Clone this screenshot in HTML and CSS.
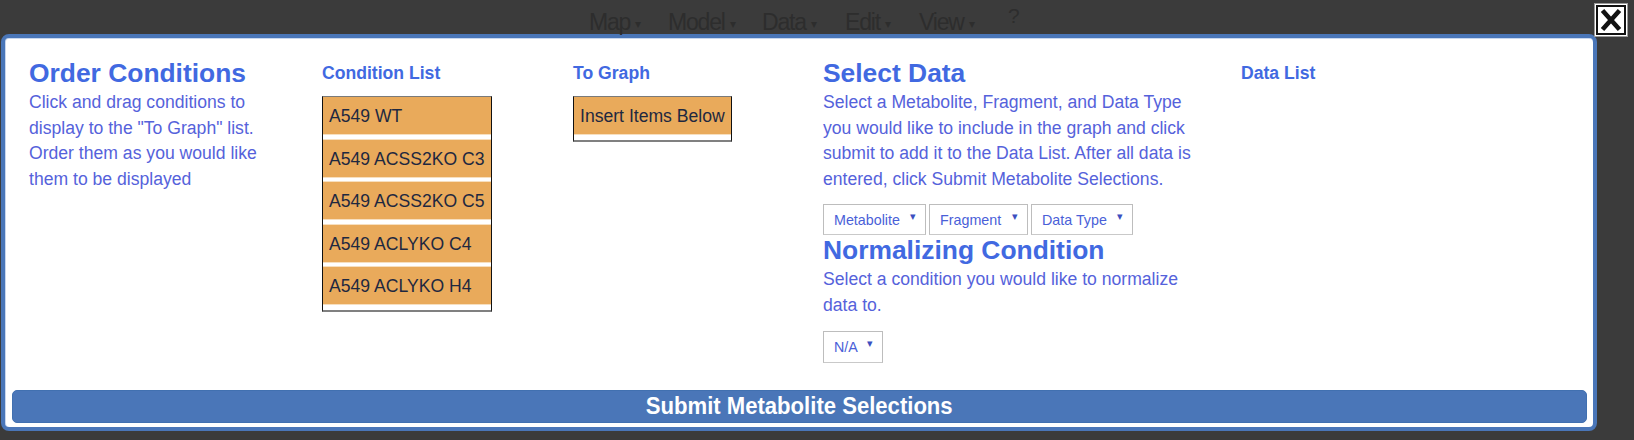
FILE: index.html
```html
<!DOCTYPE html>
<html>
<head>
<meta charset="utf-8">
<link rel="stylesheet" href="styles.css">
</head>
<body>
<div class="page">
  <nav class="menu">
    <span class="menu-item m-map"><span class="menu-text">Map</span><span class="caret">▾</span></span>
    <span class="menu-item m-model"><span class="menu-text">Model</span><span class="caret">▾</span></span>
    <span class="menu-item m-data"><span class="menu-text">Data</span><span class="caret">▾</span></span>
    <span class="menu-item m-edit"><span class="menu-text">Edit</span><span class="caret">▾</span></span>
    <span class="menu-item m-view"><span class="menu-text">View</span><span class="caret">▾</span></span>
    <span class="menu-item help"><span class="menu-text">?</span></span>
  </nav>

  <div class="modal">
    <div class="cols">
      <section class="col">
        <h2 class="title">Order Conditions</h2>
        <p class="desc desc-narrow">Click and drag conditions to display to the "To Graph" list. Order them as you would like them to be displayed</p>
      </section>

      <section class="col">
        <h4 class="subtitle">Condition List</h4>
        <ul class="sortlist">
          <li class="item">A549 WT</li>
          <li class="item">A549 ACSS2KO C3</li>
          <li class="item">A549 ACSS2KO C5</li>
          <li class="item">A549 ACLYKO C4</li>
          <li class="item">A549 ACLYKO H4</li>
        </ul>
      </section>

      <section class="col">
        <h4 class="subtitle">To Graph</h4>
        <ul class="sortlist">
          <li class="item">Insert Items Below</li>
        </ul>
      </section>

      <section class="col">
        <h2 class="title">Select Data</h2>
        <p class="desc desc-wide">Select a Metabolite, Fragment, and Data Type you would like to include in the graph and click submit to add it to the Data List. After all data is entered, click Submit Metabolite Selections.</p>
        <div class="selects">
          <div class="select w-metab"><span>Metabolite</span><span class="sel-caret">▾</span></div>
          <div class="select w-frag"><span>Fragment</span><span class="sel-caret">▾</span></div>
          <div class="select w-type"><span>Data Type</span><span class="sel-caret">▾</span></div>
        </div>
        <h2 class="title">Normalizing Condition</h2>
        <p class="desc desc-wide">Select a condition you would like to normalize data to.</p>
        <div class="selects">
          <div class="select w-na"><span>N/A</span><span class="sel-caret">▾</span></div>
        </div>
      </section>

      <section class="col">
        <h4 class="subtitle">Data List</h4>
      </section>
    </div>

    <button class="submit"><span class="submit-label">Submit Metabolite Selections</span></button>
  </div>

  <button class="close" aria-label="Close">
    <svg width="34" height="34" viewBox="0 0 34 34">
      <rect x="0.5" y="0.5" width="33" height="33" fill="#ffffff" stroke="#9a9a9a"/>
      <rect x="3" y="3" width="28" height="28" fill="#ffffff" stroke="#111111" stroke-width="2"/>
      <path d="M8.5 7.5 L25.5 26.5 M25.5 7.5 L8.5 26.5" stroke="#111111" stroke-width="4.6" stroke-linecap="butt"/>
    </svg>
  </button>
</div>
</body>
</html>
```

FILE: styles.css
```css
html, body {
  margin: 0;
  padding: 0;
  background: #3b3b3b;
  height: 440px;
  overflow: hidden;
}

.page {
  position: relative;
  font-family: "Liberation Sans", Arial, sans-serif;
}

/* faint background menu */
.menu {
  height: 34px;
  display: flex;
  align-items: flex-start;
  padding-left: 589px;
  padding-top: 9px;
  color: #2d2d2d;
  font-size: 23px;
  line-height: 23px;
  box-sizing: border-box;
}
.menu-item {
  display: flex;
  align-items: center;
  white-space: nowrap;
}
.menu-text {
  display: inline-block;
  letter-spacing: -1.2px;
}
.m-map { width: 79px; }
.m-model { width: 94px; }
.m-data { width: 83px; }
.m-edit { width: 74px; }
.m-view { width: 89px; }
.menu-item .caret { font-size: 12px; margin-top: 4px; margin-left: 5px; }
.menu-item.help { margin-top: -5px; font-size: 21px; }

/* modal */
.modal {
  margin-left: 1px;
  width: 1596px;
  height: 397px;
  box-sizing: border-box;
  border: 4px solid #4a76b8;
  border-radius: 8px;
  background: #ffffff;
  box-shadow: inset 0 1px 0 #c9d7ee, inset 1px 0 0 #c9d7ee;
  display: flex;
  flex-direction: column;
  padding: 20px 6px 4px 7px;
}

.cols {
  flex: 1;
  display: grid;
  grid-template-columns: 293px 251px 250px 418px 1fr;
  padding-left: 17px;
}

.col {
  display: flex;
  flex-direction: column;
  align-items: flex-start;
}

.title {
  margin: 0;
  font-size: 26.4px;
  line-height: 30px;
  font-weight: bold;
  color: #4169e1;
}

.subtitle {
  margin: 5px 0 0 0;
  font-size: 17.6px;
  line-height: 20px;
  font-weight: bold;
  color: #4169e1;
}

.desc {
  margin: 2px 0 0 0;
  font-size: 17.6px;
  line-height: 25.6px;
  color: #5562db;
}
.desc-narrow { width: 250px; }
.desc-wide { width: 378px; }

/* sortable lists */
.sortlist {
  list-style: none;
  margin: 13px 0 0 0;
  padding: 0;
  border: 1px solid #111111;
  border-top-color: #7a7a7a;
  border-bottom: 2px solid #808080;
  background: #ffffff;
}
.item {
  height: 37px;
  line-height: 39px;
  padding: 0 6px;
  margin-bottom: 5.5px;
  background: #e9aa5b;
  color: #1e2840;
  font-size: 17.6px;
  white-space: nowrap;
  box-shadow: 0 1px 0 #f7dfbf, 0 -1px 0 #f7dfbf;
}
.item:first-child { box-shadow: 0 1px 0 #f7dfbf; }

/* selects */
.selects {
  display: flex;
  gap: 3px;
  margin: 12px 0 0 0;
}
.select {
  box-sizing: border-box;
  height: 31px;
  border: 1px solid #bdbdbd;
  border-bottom-color: #c9c9c9;
  background: #ffffff;
  color: #4a5fd8;
  font-size: 14.3px;
  display: flex;
  align-items: center;
  justify-content: space-between;
  padding: 0 9px 0 10px;
}
.sel-caret {
  font-size: 11px;
  color: #3c4fc0;
  margin-top: -6px;
}
.w-metab { width: 103px; }
.w-frag { width: 99px; }
.w-type { width: 102px; }
.w-na { width: 60px; height: 32px; }

/* submit */
.submit {
  height: 33px;
  width: 100%;
  border: 1px solid #4170b0;
  border-radius: 5px;
  background: #4a76b8;
  color: #ffffff;
  font-family: "Liberation Sans", Arial, sans-serif;
  font-weight: bold;
  font-size: 23.5px;
  padding: 0;
  display: flex;
  align-items: center;
  justify-content: center;
}
.submit-label {
  display: inline-block;
  transform: scaleX(0.94);
}

/* close button overlay */
.close {
  position: absolute;
  left: 1594px;
  top: 3px;
  width: 34px;
  height: 34px;
  padding: 0;
  border: 0;
  background: transparent;
}
.close svg { display: block; }
```
